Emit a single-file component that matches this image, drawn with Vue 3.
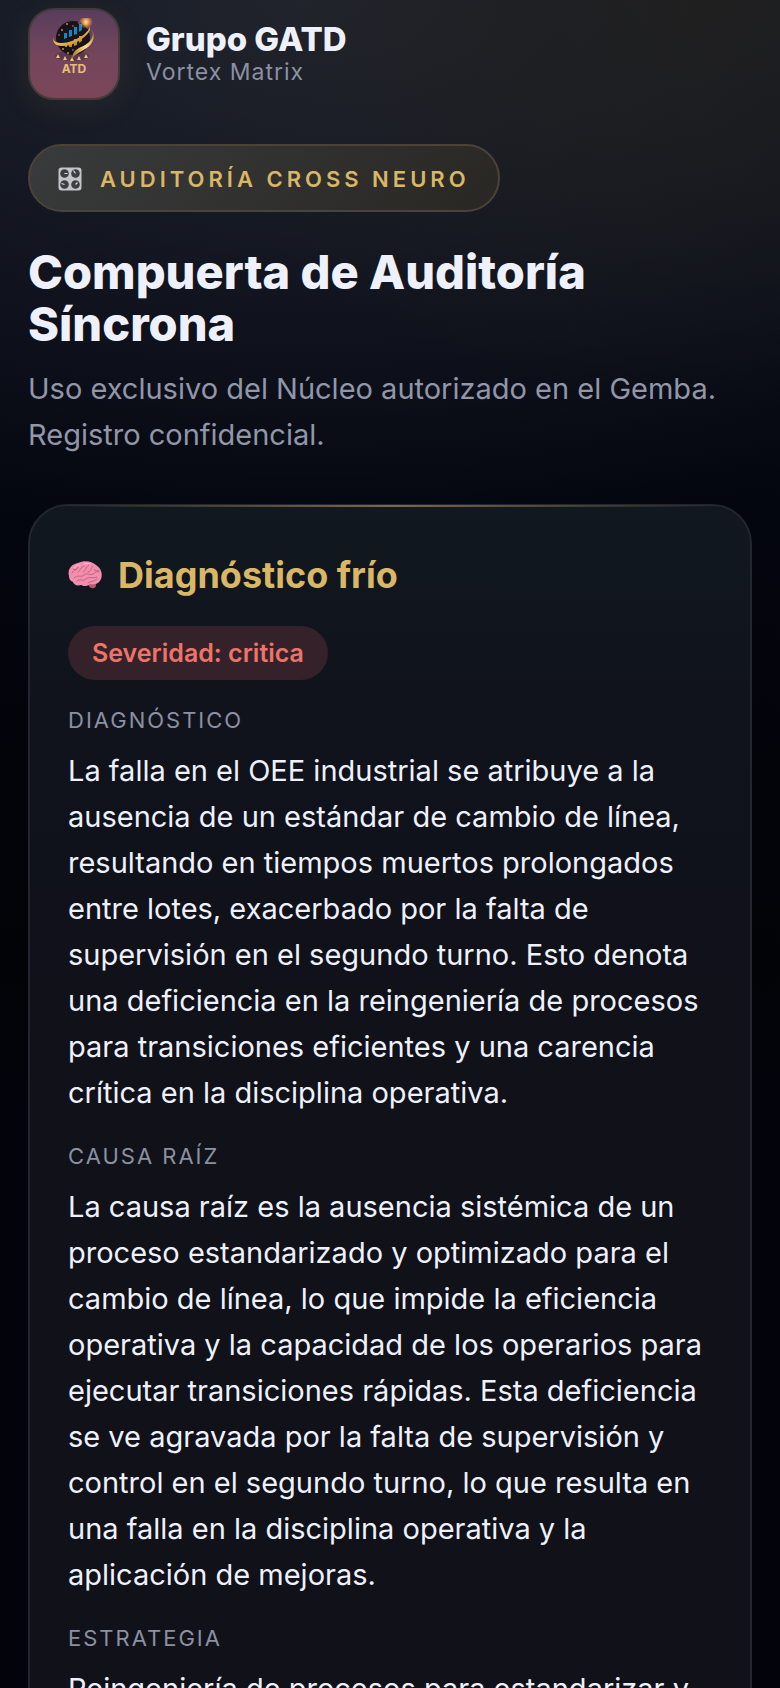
<template>
    <main class="audit-page">
        <header class="brand">
            <div class="brand-logo">
                <svg class="logo-globe" viewBox="0 0 44 44" aria-hidden="true">
                    <defs>
                        <linearGradient id="gold" x1="0" y1="0" x2="1" y2="1">
                            <stop offset="0" stop-color="#8a5a16" />
                            <stop offset="0.5" stop-color="#f0bf52" />
                            <stop offset="1" stop-color="#9c6512" />
                        </linearGradient>
                        <linearGradient id="goldBand" x1="1" y1="0" x2="0" y2="1">
                            <stop offset="0" stop-color="#b8791c" />
                            <stop offset="0.5" stop-color="#ffdf8c" />
                            <stop offset="1" stop-color="#a56c17" />
                        </linearGradient>
                        <radialGradient id="spark">
                            <stop offset="0" stop-color="#fff0c0" />
                            <stop offset="0.35" stop-color="#f4a04c" />
                            <stop offset="1" stop-color="#f08a3c" stop-opacity="0" />
                        </radialGradient>
                    </defs>
                    <ellipse cx="20" cy="38" rx="17" ry="5" fill="#3a2540" opacity="0.45" />
                    <circle cx="21" cy="20" r="17" fill="#17131a" />
                    <g fill="#c98f35">
                        <circle cx="10" cy="12" r="1" />
                        <circle cx="15" cy="6" r="1" />
                        <circle cx="21" cy="8" r="0.8" />
                        <circle cx="7" cy="17" r="0.8" />
                        <circle cx="27" cy="5" r="0.8" />
                        <circle cx="11" cy="31" r="1" />
                        <circle cx="16" cy="35" r="1" />
                        <circle cx="21" cy="32" r="0.8" />
                    </g>
                    <path d="M12 21v-6h3v5zM17 19v-7h3v6zM22 17v-8h3v7zM27 14V6h3v6z" fill="#1687c4" />
                    <path d="M13 29v-4h2v4zM17 29v-5h3v5zM22 28v-7h3v6zM27 25v-7h3v5z" fill="#c8892d" />
                    <path d="M2 17c-4 8 8 10 18 6s16-9 18-14c1 6-8 13-17 17S-3 29 2 17z" fill="url(#gold)" />
                    <path d="M38 9c7 9 0 16-9 20-6 3-8 5-9 11 3-3 6-5 10-7 10-5 16-14 8-24z" fill="url(#goldBand)" />
                    <circle cx="34" cy="4" r="7" fill="url(#spark)" />
                    <g fill="#eec27c">
                        <path d="M6 36l2 4H4zM13 38l2 4h-4zM20 39l2 4h-4zM27 38l2 4h-4zM34 36l2 4h-4z" />
                    </g>
                </svg>
                <span class="logo-text">ATD</span>
            </div>
            <div>
                <div class="brand-name">Grupo GATD</div>
                <div class="brand-sub">Vortex Matrix</div>
            </div>
        </header>

        <div class="badge">
            <svg class="badge-icon" viewBox="0 0 24 24" aria-hidden="true">
                <rect x="0.5" y="0.5" width="23" height="23" rx="3" fill="#c3c5c8" />
                <g fill="#3c3f42">
                    <circle cx="6.5" cy="6.5" r="4.3" />
                    <circle cx="17.5" cy="6.5" r="4.3" />
                    <circle cx="6.5" cy="17.5" r="4.3" />
                    <circle cx="17.5" cy="17.5" r="4.3" />
                </g>
                <path d="M6.500 6.500h3M17.500 6.500l-2-3M6.500 17.500l-3-1M17.500 17.500l2-2" stroke="#d8dadc" stroke-width="1.200" />
            </svg>
            <span>Auditoría Cross Neuro</span>
        </div>

        <h1>Compuerta de Auditoría Síncrona</h1>
        <p class="lead">Uso exclusivo del Núcleo autorizado en el Gemba. Registro confidencial.</p>

        <section class="card">
            <h2>
                <svg class="brain" viewBox="0 0 34 28" aria-hidden="true">
                    <path d="M20 20c0 5 2 8 6 7 3-1 2-5 1-7z" fill="#b85a70" />
                    <path d="M1 15C-1 8 4 3 10 2c6-3 14-2 18 2 5 3 7 9 5 14-2 5-7 6-11 5-3 3-7 2-9 1-4 1-7 0-8-3-3-1-4-3-4-6z" fill="#f08fae" />
                    <g fill="none" stroke="#c9607f" stroke-linecap="round">
                        <path d="M4 12c2-4 5-2 6-6M10 11c2 0 2-5 6-6M15 11c3 0 2-5 6-7M20 11c4 0 2-4 5-6M6 17c4-4 7 0 10-3s6 1 9-1 3-3 6-2" />
                        <path d="M9 20c3-3 6 1 9-2s7 0 11-2M5 8c1 1 3 1 4 0M26 9c2 0 3 1 5 1M20 22c2-2 6-1 9-4" />
                    </g>
                    <path d="M6 7c2-3 4-3 6-3M16 3c2-1 4-1 6 0" fill="none" stroke="#ffc3d4" stroke-linecap="round" />
                </svg>
                Diagnóstico frío
            </h2>
            <span class="severity">Severidad: {{ severity }}</span>
            <div v-for="item in sections" :key="item.label" class="block">
                <h3>{{ item.label }}</h3>
                <p>{{ item.text }}</p>
            </div>
        </section>
    </main>
</template>

<script setup>
import { ref } from 'vue';

const severity = ref('critica');

const sections = ref([
    {
        label: 'Diagnóstico',
        text: 'La falla en el OEE industrial se atribuye a la ausencia de un estándar de cambio de línea, resultando en tiempos muertos prolongados entre lotes, exacerbado por la falta de supervisión en el segundo turno. Esto denota una deficiencia en la reingeniería de procesos para transiciones eficientes y una carencia crítica en la disciplina operativa.',
    },
    {
        label: 'Causa raíz',
        text: 'La causa raíz es la ausencia sistémica de un proceso estandarizado y optimizado para el cambio de línea, lo que impide la eficiencia operativa y la capacidad de los operarios para ejecutar transiciones rápidas. Esta deficiencia se ve agravada por la falta de supervisión y control en el segundo turno, lo que resulta en una falla en la disciplina operativa y la aplicación de mejoras.',
    },
    {
        label: 'Estrategia',
        text: 'Reingeniería de procesos para estandarizar y',
    },
]);
</script>

<style>
body {
    margin: 0;
    background: #03040b;
}
</style>

<style scoped>
.audit-page {
    box-sizing: border-box;
    min-height: 100vh;
    padding: 8px 28px 0;
    color: #eef1fb;
    font-family: Inter, "Noto Sans", sans-serif;
    background:
        radial-gradient(ellipse 70% 400px at 90% 0, rgba(36, 34, 30, 0.7), transparent),
        radial-gradient(ellipse 130% 540px at 40% 0, #20242e, transparent),
        linear-gradient(#070b18 0, #04060f 500px, #020307 960px, #03030b 1100px);
}

.brand {
    display: flex;
    align-items: center;
    gap: 26px;
    margin-bottom: 44px;
}

.brand-logo {
    box-sizing: border-box;
    display: flex;
    flex-direction: column;
    align-items: center;
    width: 92px;
    height: 92px;
    padding-top: 8px;
    border: 2px solid #443a3b;
    border-radius: 26px;
    background: linear-gradient(#573e5c, #74455c 50%, #7b4658);
    box-shadow: 0 8px 32px rgba(212, 175, 90, 0.08);
}

.logo-globe {
    width: 44px;
    height: 44px;
}

.logo-text {
    color: #e8bd78;
    font-size: 12px;
    font-weight: 700;
    line-height: 14px;
}

.brand-name {
    font-size: 33px;
    font-weight: 800;
    line-height: 36px;
}

.brand-sub {
    color: #8b90a2;
    font-size: 23px;
    line-height: 30px;
    letter-spacing: 1px;
}

.badge {
    box-sizing: border-box;
    display: flex;
    align-items: center;
    gap: 18px;
    width: fit-content;
    height: 68px;
    margin-bottom: 34px;
    padding: 2px 28px 0;
    border: 2px solid #4b4436;
    border-radius: 34px;
    color: #d9b766;
    font-size: 22px;
    font-weight: 600;
    letter-spacing: 4px;
    text-transform: uppercase;
    background: linear-gradient(135deg, #393b3c, #292723);
}

.badge-icon {
    width: 24px;
    height: 24px;
}

h1 {
    margin: 0 0 16px;
    font-size: 47px;
    font-weight: 800;
    line-height: 52px;
}

.lead {
    margin: 0 0 46px;
    color: #9196a8;
    font-size: 29px;
    line-height: 46px;
}

.card {
    position: relative;
    padding: 46px 38px;
    border: 2px solid #23262e;
    border-radius: 40px;
    background: linear-gradient(#111820, #10131c 200px, #101119 500px);
}

.card::before {
    content: "";
    position: absolute;
    top: -1px;
    left: 28px;
    right: 28px;
    height: 2px;
    background: linear-gradient(90deg, transparent, #7b6b43, transparent);
}

h2 {
    display: flex;
    align-items: center;
    gap: 16px;
    margin: 0 0 28px;
    color: #d9b766;
    font-size: 36px;
    font-weight: 700;
    line-height: 46px;
}

.brain {
    width: 34px;
    height: 28px;
}

.severity {
    display: block;
    width: fit-content;
    padding: 0 24px;
    border-radius: 27px;
    color: #ea7568;
    font-size: 25px;
    font-weight: 600;
    line-height: 54px;
    background: #35212a;
}

.block h3 {
    margin: 22px 0 10px;
    color: #8b90a2;
    font-size: 22px;
    font-weight: 400;
    line-height: 36px;
    letter-spacing: 2px;
    text-transform: uppercase;
}

.block p {
    margin: 0;
    font-size: 29px;
    line-height: 46px;
}
</style>
